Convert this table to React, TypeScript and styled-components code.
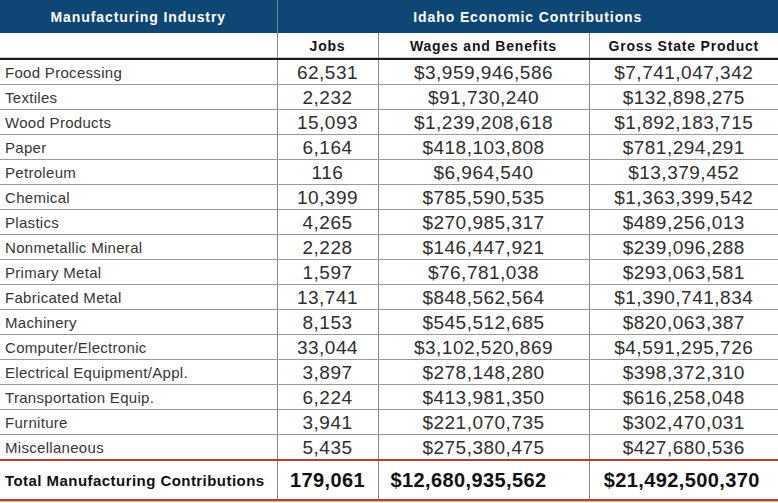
import React from "react";
import styled, { createGlobalStyle } from "styled-components";

const Global = createGlobalStyle`
  html, body { margin: 0; padding: 0; background: #ffffff; }
  body { font-family: "Liberation Sans", Arial, sans-serif; }
`;

const Table = styled.table`
  width: 778px;
  table-layout: fixed;
  border-collapse: collapse;
  border-spacing: 0;
`;

const TopHead = styled.th<{ $first?: boolean }>`
  height: 33px;
  padding: 0;
  box-sizing: border-box;
  background: #0e4675;
  color: #ffffff;
  font-size: 14px;
  font-weight: 700;
  letter-spacing: 0.9px;
  text-align: center;
  border-left: ${(p) => (p.$first ? "none" : "1px solid #6d87a3")};
`;

const SubHead = styled.th<{ $first?: boolean }>`
  height: 25px;
  padding: 0;
  background: #ffffff;
  color: #151515;
  font-size: 14px;
  font-weight: 700;
  letter-spacing: 0.8px;
  text-align: center;
  border-left: ${(p) => (p.$first ? "none" : "1px solid #8a8a8a")};
  border-bottom: 2px solid #1e1e1e;
  box-shadow: inset 0 -1px 0 #c4c4c4;
`;

const Row = styled.tr``;

const Cell = styled.td<{ $label?: boolean }>`
  height: 24px;
  padding: ${(p) => (p.$label ? "0 0 0 5px" : "0")};
  text-align: ${(p) => (p.$label ? "left" : "center")};
  font-size: ${(p) => (p.$label ? "15px" : "19px")};
  letter-spacing: ${(p) => (p.$label ? "0.3px" : "0.5px")};
  color: ${(p) => (p.$label ? "#363636" : "#2e2e2e")};
  white-space: nowrap;
  border-left: ${(p) => (p.$label ? "none" : "1px solid #8a8a8a")};
  border-bottom: 1px solid #9a9a9a;
  line-height: 1;
`;

const TotalCell = styled.td<{ $label?: boolean; $offset?: number }>`
  height: 38px;
  padding: ${(p) => (p.$label ? "0 0 0 5px" : `0 ${p.$offset ?? 0}px 0 0`)};
  text-align: ${(p) => (p.$label ? "left" : "center")};
  font-size: ${(p) => (p.$label ? "15px" : "20px")};
  font-weight: 700;
  letter-spacing: ${(p) => (p.$label ? "0.45px" : "0.4px")};
  color: #111111;
  white-space: nowrap;
  border-left: ${(p) => (p.$label ? "none" : "1px solid #8a8a8a")};
  border-top: 2px solid #b5432b;
  border-bottom: 2px solid #b5432b;
`;

const BottomRule = styled.div`
  width: 778px;
  height: 1px;
  background: #e2b3a8;
`;

const rows: [string, string, string, string][] = [
  ["Food Processing", "62,531", "$3,959,946,586", "$7,741,047,342"],
  ["Textiles", "2,232", "$91,730,240", "$132,898,275"],
  ["Wood Products", "15,093", "$1,239,208,618", "$1,892,183,715"],
  ["Paper", "6,164", "$418,103,808", "$781,294,291"],
  ["Petroleum", "116", "$6,964,540", "$13,379,452"],
  ["Chemical", "10,399", "$785,590,535", "$1,363,399,542"],
  ["Plastics", "4,265", "$270,985,317", "$489,256,013"],
  ["Nonmetallic Mineral", "2,228", "$146,447,921", "$239,096,288"],
  ["Primary Metal", "1,597", "$76,781,038", "$293,063,581"],
  ["Fabricated Metal", "13,741", "$848,562,564", "$1,390,741,834"],
  ["Machinery", "8,153", "$545,512,685", "$820,063,387"],
  ["Computer/Electronic", "33,044", "$3,102,520,869", "$4,591,295,726"],
  ["Electrical Equipment/Appl.", "3,897", "$278,148,280", "$398,372,310"],
  ["Transportation Equip.", "6,224", "$413,981,350", "$616,258,048"],
  ["Furniture", "3,941", "$221,070,735", "$302,470,031"],
  ["Miscellaneous", "5,435", "$275,380,475", "$427,680,536"],
];

export default function App() {
  return (
    <>
      <Global />
      <Table>
        <colgroup>
          <col style={{ width: 277 }} />
          <col style={{ width: 101 }} />
          <col style={{ width: 211 }} />
          <col style={{ width: 189 }} />
        </colgroup>
        <thead>
          <tr>
            <TopHead $first>Manufacturing Industry</TopHead>
            <TopHead colSpan={3}>Idaho Economic Contributions</TopHead>
          </tr>
          <tr>
            <SubHead $first></SubHead>
            <SubHead>Jobs</SubHead>
            <SubHead>Wages and Benefits</SubHead>
            <SubHead>Gross State Product</SubHead>
          </tr>
        </thead>
        <tbody>
          {rows.map((r) => (
            <Row key={r[0]}>
              <Cell $label>{r[0]}</Cell>
              <Cell>{r[1]}</Cell>
              <Cell>{r[2]}</Cell>
              <Cell>{r[3]}</Cell>
            </Row>
          ))}
          <Row>
            <TotalCell $label>Total Manufacturing Contributions</TotalCell>
            <TotalCell>179,061</TotalCell>
            <TotalCell $offset={30}>$12,680,935,562</TotalCell>
            <TotalCell $offset={4}>$21,492,500,370</TotalCell>
          </Row>
        </tbody>
      </Table>
      <BottomRule />
    </>
  );
}
